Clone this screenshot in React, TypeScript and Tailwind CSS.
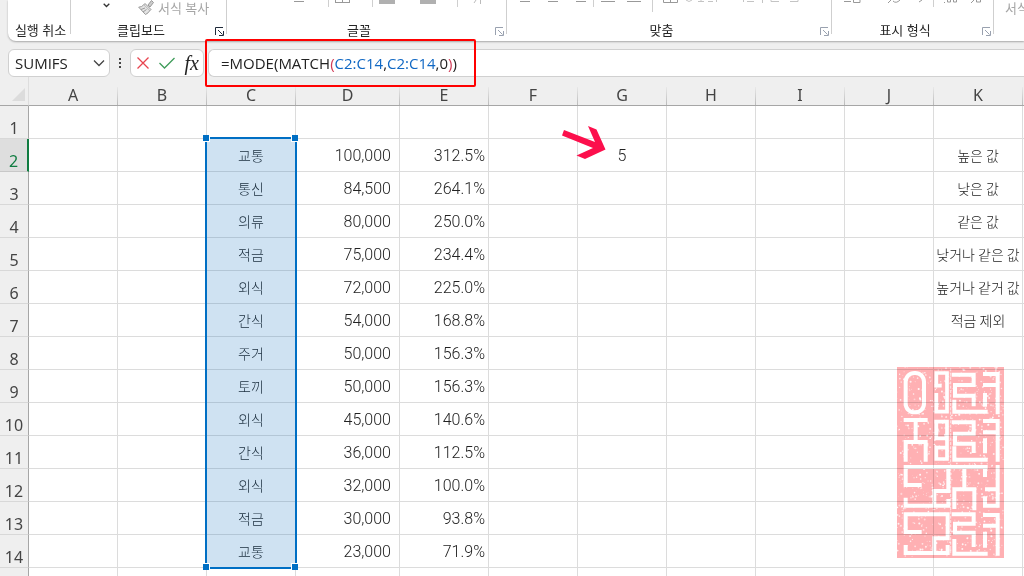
import { useState } from 'react';

const COLS = ['A', 'B', 'C', 'D', 'E', 'F', 'G', 'H', 'I', 'J', 'K'];

type Row = { category: string; amount: string; rate: string; result?: string; note?: string };

const ROWS: Row[] = [
  { category: '', amount: '', rate: '' },
  { category: '교통', amount: '100,000', rate: '312.5%', result: '5', note: '높은 값' },
  { category: '통신', amount: '84,500', rate: '264.1%', note: '낮은 값' },
  { category: '의류', amount: '80,000', rate: '250.0%', note: '같은 값' },
  { category: '적금', amount: '75,000', rate: '234.4%', note: '낮거나 같은 값' },
  { category: '외식', amount: '72,000', rate: '225.0%', note: '높거나 같거 값' },
  { category: '간식', amount: '54,000', rate: '168.8%', note: '적금 제외' },
  { category: '주거', amount: '50,000', rate: '156.3%' },
  { category: '토끼', amount: '50,000', rate: '156.3%' },
  { category: '외식', amount: '45,000', rate: '140.6%' },
  { category: '간식', amount: '36,000', rate: '112.5%' },
  { category: '외식', amount: '32,000', rate: '100.0%' },
  { category: '적금', amount: '30,000', rate: '93.8%' },
  { category: '교통', amount: '23,000', rate: '71.9%' },
  { category: '', amount: '', rate: '' },
];

// worn spots on the seal, same pattern on every render
const SPECKS = (() => {
  let seed = 7;
  const rand = () => {
    seed = (seed * 16807) % 2147483647;
    return seed / 2147483647;
  };
  return Array.from({ length: 1000 }, () => ({
    x: 6 + rand() * 320,
    y: 6 + rand() * 570,
    r: 0.8 + rand() * 2.4,
    o: 0.35 + rand() * 0.6,
  }));
})();

function Divider() {
  return <i className="absolute right-0 top-0 h-[34px] w-px bg-[#cfcfcf]" />;
}

function Launcher({ dark = false }: { dark?: boolean }) {
  return (
    <button type="button" aria-label="More options" className={`absolute right-[3px] bottom-[5px] ${dark ? 'text-gray-800' : 'text-gray-400'}`}>
      <svg className="w-[9px] h-[9px]" viewBox="0 0 9 9" fill="none" stroke="currentColor">
        <path d="M0.5 8V0.5H8M3 3L7.5 7.5M8.5 4V8.5H4" />
      </svg>
    </button>
  );
}

function Ribbon() {
  return (
    <header className="ml-2 h-[41px] flex bg-white rounded-bl-lg shadow-[0_1px_2px_rgba(0,0,0,0.3)] text-[13px] leading-4 text-[#262626]">
      <section className="w-[63px] shrink-0 relative flex items-end justify-center pb-[3px]">
        <h2 className="whitespace-nowrap pl-0.5">실행 취소</h2>
        <Divider />
      </section>
      <section className="w-[156px] shrink-0 relative flex items-end justify-center pb-[3px] pr-4">
        <svg className="absolute left-8 top-[3px] w-[7px] h-[5px]" viewBox="0 0 7 5" fill="none" stroke="#333" strokeWidth="1.3">
          <path d="M0.7 0.7L3.5 3.5L6.3 0.7" />
        </svg>
        <button type="button" className="absolute left-[67px] top-0 flex items-center gap-1 text-[#a6a6a6] whitespace-nowrap">
          <svg className="w-4 h-4" viewBox="0 0 16 16" fill="none" stroke="#999">
            <path d="M10 5L13.5 0.5L15.5 2.5L12 7Z" fill="#ccc" />
            <path d="M7 3.5L13 9.5L11.5 11L5.5 5Z" fill="#ddd" />
            <path d="M5.5 5Q4 7 0.7 7.2L7.5 14.5Q10.5 13 11.5 11M3 9.5L7 8M5 12L8.5 9.5" fill="#e4e4e4" />
          </svg>
          서식 복사
        </button>
        <h2>클립보드</h2>
        <Launcher dark />
        <Divider />
      </section>
      <section className="w-[280px] shrink-0 relative flex items-end justify-center pb-[3px] pr-4">
        <svg className="absolute left-0 top-0 w-[280px] h-2" viewBox="0 0 280 8" fill="none" stroke="#999">
          <path d="M67 1.5H77M108 2.5H123M108.5 0V2M115.5 0V2M122.5 0V2" />
          <path d="M101.5 0V7M145.5 0V7M230.5 0V7" stroke="#cfcfcf" />
          <path d="M152 2H168M193 2H209" stroke="#b0b0b0" strokeWidth="4" />
          <path d="M247 3L249 0M253.5 0V4" stroke="#bbb" />
        </svg>
        <h2>글꼴</h2>
        <Launcher />
        <Divider />
      </section>
      <section className="w-[325px] shrink-0 relative flex items-end justify-center pb-[3px] pr-4">
        <svg className="absolute left-0 top-0 w-[325px] h-3" viewBox="0 0 325 12" fill="none" stroke="#999">
          <path d="M13 1.5H23M41 1.5H51M69 1.5H79M94 1.5H108M120 1.5H134M156.5 0V2.5H170.5V0M163.5 0V2" />
          <path d="M86.5 0V7M145.5 0V12" stroke="#cfcfcf" />
          <path d="M179 0Q182 3 185 0M191 1.5H197M194 0V1M201 1.5H206M209.5 0V2M236.5 0V2M240 1.5H247M255.5 0V3M264 0V1.5H272M283 1.5H291V0" stroke="#c4c4c4" />
        </svg>
        <h2>맞춤</h2>
        <Launcher />
        <Divider />
      </section>
      <section className="w-[162px] shrink-0 relative flex items-end justify-center pb-[3px] pr-4">
        <svg className="absolute left-0 top-0 w-[162px] h-2" viewBox="0 0 162 8" fill="none" stroke="#999">
          <path d="M12 1.5H19M21.5 0V2.5H28V0M56 3L59 0M61 1Q64 4 68 0M87 2L90 0M112 2.5H113M115.5 0V2H118.5V0M121.5 0V2H124.5V0M139 3L142 0M144.5 0V2H148.5V0" />
          <path d="M101.5 0V7" stroke="#cfcfcf" />
        </svg>
        <h2>표시 형식</h2>
        <Launcher />
        <Divider />
      </section>
      <section className="grow overflow-hidden whitespace-nowrap pl-[11px] text-[#a6a6a6]">서식</section>
    </header>
  );
}

function FormulaBar() {
  const [name, setName] = useState('SUMIFS');
  return (
    <div className="relative z-20 flex h-7 mt-2 ml-2 text-[15px] text-[#222] font-['Open_Sans','Noto_Sans',sans-serif]">
      <div className="w-[102px] shrink-0 flex items-center rounded-md border border-[#d0d0d0] bg-white pl-1.5 pr-1">
        <input aria-label="Name box" value={name} onChange={(e) => setName(e.target.value)} className="w-full min-w-0 outline-none bg-transparent" />
        <svg className="w-3 h-2 shrink-0" viewBox="0 0 12 8" fill="none" stroke="#444" strokeWidth="1.3">
          <path d="M1 1.5L6 6.5L11 1.5" />
        </svg>
      </div>
      <svg className="w-5 h-7 shrink-0" viewBox="0 0 20 28" fill="#444">
        <path d="M9 9h2v2h-2zM9 13h2v2h-2zM9 17h2v2h-2z" />
      </svg>
      <div className="w-[74px] shrink-0 flex items-center justify-between rounded-md border border-[#d0d0d0] bg-white pl-1.5 pr-1">
        <button type="button" aria-label="Cancel">
          <svg className="w-3 h-3" viewBox="0 0 12 12" stroke="#e8444f" strokeWidth="1.3">
            <path d="M0.5 0.5L11.5 11.5M11.5 0.5L0.5 11.5" />
          </svg>
        </button>
        <button type="button" aria-label="Enter">
          <svg className="w-4 h-3" viewBox="0 0 16 12" fill="none" stroke="#3f9c5a" strokeWidth="1.3">
            <path d="M0.5 6L5.5 11L15.5 1" />
          </svg>
        </button>
        <button type="button" aria-label="Insert function" className="font-['Liberation_Serif',serif] italic text-xl leading-5">
          fx
        </button>
      </div>
      <div className="ml-1 grow relative flex items-center rounded-l-md border border-r-0 border-[#d0d0d0] bg-white pl-3 whitespace-nowrap">
        <div role="textbox" aria-label="Formula" contentEditable suppressContentEditableWarning className="outline-none">
          =MODE(MATCH<span className="text-[#d13b57]">(</span>
          <span className="text-[#1068c4]">C2:C14</span>,<span className="text-[#1068c4]">C2:C14</span>,0
          <span className="text-[#d13b57]">)</span>)
        </div>
        <div className="absolute -left-1 -top-[11px] w-[271px] h-12 border-2 border-[#ff0000] rounded-xs pointer-events-none" />
      </div>
    </div>
  );
}

function Selection() {
  return (
    <div className="absolute -left-0.5 -top-0.5 z-10 w-[92px] h-[432px] border-2 border-[#006fc4] bg-[#0f6cbd]/20 pointer-events-none">
      <i className="absolute -left-1 -top-1 size-[7px] bg-[#006fc4] border-r border-b border-white" />
      <i className="absolute -right-[3px] -top-1 size-[7px] bg-[#006fc4] border-l border-b border-white" />
      <i className="absolute -left-1 -bottom-[3px] size-[7px] bg-[#006fc4] border-r border-t border-white" />
      <i className="absolute -right-[3px] -bottom-[3px] size-[7px] bg-[#006fc4] border-l border-t border-white" />
    </div>
  );
}

function Arrow() {
  return (
    <svg className="absolute -left-[17px] -top-[13px] z-10 w-[46px] h-9" viewBox="0 0 46 36" fill="#fc0f4c">
      <path d="M3 4L34 16L27 0L35.5 3.5L44.5 23.5L24 33L15.5 29.5L32 22L1 9.5Z" />
    </svg>
  );
}

function Seal() {
  return (
    <svg className="absolute right-5 top-[290px] w-[107px] h-[191px] mix-blend-multiply pointer-events-none" viewBox="6 6 321 573" fill="none">
      <rect x="6" y="6" width="321" height="573" fill="#ffb0b3" />
      <g fill="#fff">
        {SPECKS.map((s, i) => (
          <circle key={i} cx={s.x} cy={s.y} r={s.r} opacity={s.o} />
        ))}
      </g>
      <g stroke="#fff" strokeWidth="12">
        <rect x="32" y="24" width="55" height="118" rx="26" />
        <path d="M124 62V24H156V140H124V84M118 62H140" strokeWidth="11" />
        <path d="M170 29H236V60H180V92H236V124M178 104V140H278" />
        <path d="M264 27H308V148M264 60H308M270 84V125" />
        <path d="M26 165H98M62 165V230M32 290V231H92V290" />
        <path d="M118 170H156V282H124V248H152M124 170V220H156" strokeWidth="11" />
        <path d="M170 172H236V206H180V236H236V264M178 244V284H278" />
        <path d="M264 168H308V290M264 202H308M270 220V265" />
        <path d="M80 360H32V306H278M160 306V378H118V422M32 398V422H160V402" />
        <path d="M208 306V372M178 432V373H238V436" />
        <path d="M270 308V336M308 300V422H270V394M270 373H308" />
        <path d="M80 501H32V448H158V520H118V564M32 540V564H158V540" />
        <path d="M170 448H236V476H180V503H236V546M178 522V566H278" />
        <path d="M264 450H308V572M264 482H308M270 500V548" />
      </g>
      <path d="M167 10V570" stroke="#fff" strokeWidth="2" strokeDasharray="9 4" />
    </svg>
  );
}

export default function App() {
  return (
    <div className="h-screen overflow-hidden bg-[#efefef] font-['Noto_Sans','Noto_Sans_CJK_KR',sans-serif]">
      <Ribbon />
      <FormulaBar />
      <main className="relative overflow-hidden">
        <table className="w-full table-fixed border-separate border-spacing-0 bg-white">
          <colgroup>
            <col className="w-[29px]" />
            {COLS.map((c) => (
              <col key={c} className={c === 'D' ? 'w-[104px]' : 'w-[89px]'} />
            ))}
            <col />
          </colgroup>
          <thead>
            <tr className="h-[29px] bg-[#efefef] text-[#444] text-base leading-4">
              <th className="border-r border-b border-r-[#ddd] border-b-[#a6a6a6] p-0">
                <svg className="w-3.5 h-3.5 mt-2 ml-3" viewBox="0 0 14 14" fill="#dcdcdc">
                  <path d="M13 0V13H0Z" />
                </svg>
              </th>
              {COLS.map((c) => (
                <th key={c} className="border-b border-[#a6a6a6] p-0 pt-2 pr-px font-normal relative">
                  {c}
                  <i className="absolute right-0 bottom-0 w-px h-[18px] bg-linear-to-b from-[#e8e8e8] to-[#bbb]" />
                </th>
              ))}
              <th className="border-b border-[#a6a6a6] p-0" />
            </tr>
          </thead>
          <tbody>
            {ROWS.map((r, i) => {
              const active = i === 1;
              return (
                <tr key={i} className="h-[33px] text-sm leading-5 text-[#222] font-light">
                  <th
                    className={
                      active
                        ? 'border-r-2 border-b border-r-[#107c41] border-b-[#c8c8c8] bg-[#dedede] text-[#107c41] p-0 pt-3 text-base leading-5 font-normal'
                        : 'border-r border-b border-r-[#a6a6a6] border-b-[#d8d8d8] bg-[#efefef] text-[#444] p-0 pt-3 text-base leading-5 font-normal'
                    }
                  >
                    {i < 14 ? i + 1 : ''}
                  </th>
                  {COLS.map((c) => (
                    <td
                      key={c}
                      className={`relative border-r border-b border-[#dcdcdc] p-0 whitespace-nowrap ${
                        c === 'D'
                          ? "text-right pt-0.5 pr-2 text-base leading-5 font-['Roboto',sans-serif]"
                          : c === 'E'
                            ? "text-right pt-0.5 pr-[3px] text-base leading-5 font-['Roboto',sans-serif]"
                            : c === 'G'
                              ? "text-center pt-0.5 text-base leading-5 font-['Roboto',sans-serif]"
                              : "text-center font-['Noto_Sans_CJK_KR',sans-serif]"
                      }`}
                    >
                      {c === 'C' && r.category}
                      {c === 'D' && r.amount}
                      {c === 'E' && r.rate}
                      {c === 'G' && r.result}
                      {c === 'K' && r.note}
                      {c === 'C' && active && <Selection />}
                      {c === 'G' && active && <Arrow />}
                    </td>
                  ))}
                  <td className="border-b border-[#dcdcdc] p-0" />
                </tr>
              );
            })}
          </tbody>
        </table>
        <Seal />
      </main>
    </div>
  );
}
